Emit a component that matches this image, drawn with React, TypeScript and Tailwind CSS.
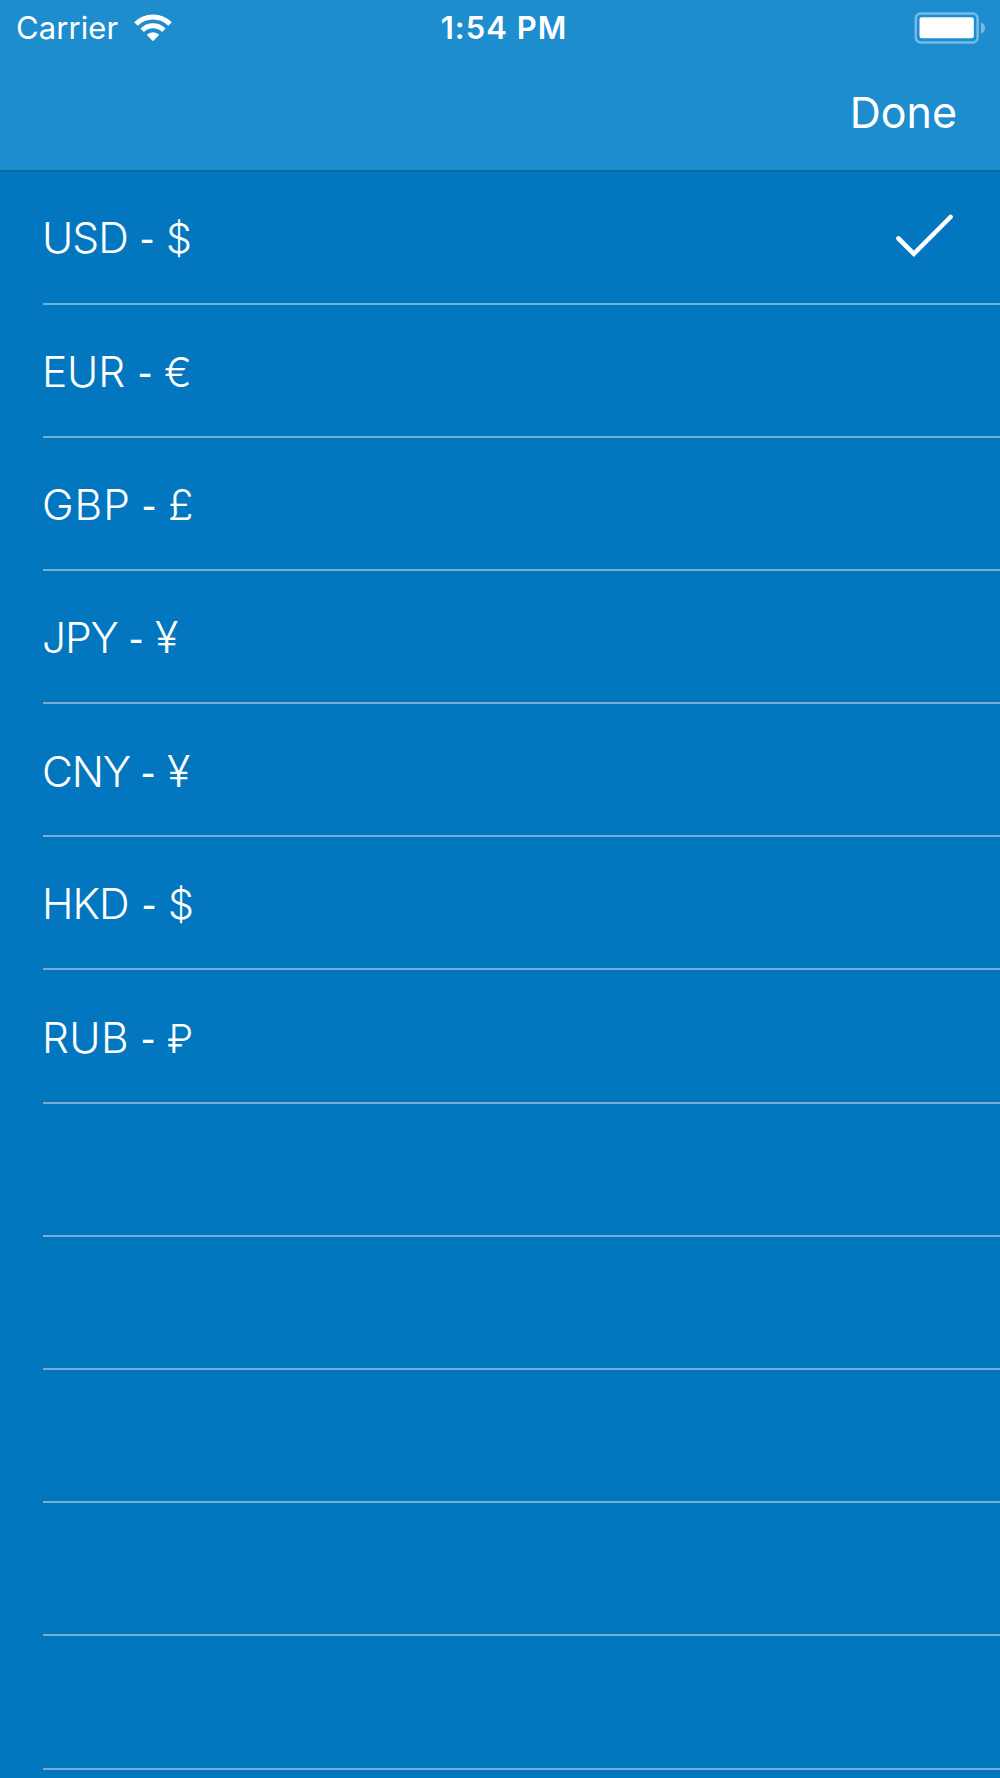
const currencies = [
  { code: "USD", symbol: "$", fit: "w-[98px] tracking-[-1px]", glyph: "text-[41px]" },
  { code: "EUR", symbol: "€", fit: "w-[96px] tracking-[-0.2px]", glyph: "text-[41px]" },
  { code: "GBP", symbol: "£", fit: "w-[100px] tracking-[1px]", glyph: "text-[42px]" },
  { code: "JPY", symbol: "¥", fit: "w-[87px] tracking-[-1.2px]", glyph: "text-[43px]" },
  { code: "CNY", symbol: "¥", fit: "w-[99px] tracking-[-1.2px]", glyph: "text-[43px]" },
  { code: "HKD", symbol: "$", fit: "w-[100px] tracking-[-1px]", glyph: "text-[41px]" },
  { code: "RUB", symbol: "₽", fit: "w-[99px] tracking-[0.4px]", glyph: "text-[39px]" },
];
const emptyRows = [0, 1, 2, 3, 4];
const selected = "USD";

function WifiIcon() {
  return (
    <svg className="-mt-0.5" width="40" height="30" viewBox="0 0 40 30" fill="none" stroke="white" strokeWidth="5">
      <path d="M3 12A24 24 0 0 1 37 12M9.2 18.2A15.3 15.3 0 0 1 30.8 18.2" />
      <path d="M13.8 22.8A8.8 8.8 0 0 1 26.2 22.8L20.8 28.5Q20 29.2 19.2 28.5Z" fill="white" stroke="none" />
    </svg>
  );
}

function BatteryIcon() {
  return (
    <svg width="72" height="32" viewBox="0 0 72 32">
      <rect x="1.8" y="1.5" width="61.8" height="29" rx="5" fill="none" stroke="#76bbe8" strokeWidth="2.4" />
      <rect x="5.5" y="5.3" width="54.3" height="20.9" rx="2.2" fill="white" />
      <path d="M67 10.5Q71 12 71 16T67 21.5Z" fill="#76bbe8" />
    </svg>
  );
}

function CheckIcon() {
  return (
    <svg className="-mt-[6px]" width="60" height="44" viewBox="0 0 60 44" fill="none" stroke="white" strokeWidth="4.6" strokeLinecap="round">
      <path d="M3.5 24.5L18.8 39.8L55.5 3" strokeLinejoin="miter" />
    </svg>
  );
}

export default function App() {
  return (
    <div className="h-[1778px] w-[1000px] overflow-hidden bg-[#0277bf] font-['Inter',sans-serif] text-white">
      <header className="h-[172px] border-b-2 border-[#0c68a2] bg-[#1e8dce]">
        <div className="grid h-[55px] grid-cols-3 items-center pl-4 pr-[14px]">
          <div className="flex items-center gap-[15px] pt-px text-[31px]">
            <span className="tracking-[0.1px]">Carrier</span>
            <WifiIcon />
          </div>
          <span className="pl-[6px] pt-px text-center text-[31px] font-semibold tracking-[1px]">1:54 PM</span>
          <div className="flex justify-end">
            <BatteryIcon />
          </div>
        </div>
        <div className="flex h-[115px] items-center justify-end pr-[43px] text-[43px]">Done</div>
      </header>
      <main className="-mt-[0.7px]">
        {currencies.map(({ code, symbol, fit, glyph }) => (
          <div key={code} className="ml-[43px] flex h-[133.2px] items-center justify-between border-b-2 border-[#7aaed4] pr-[45px] pt-[4px] text-[42.5px] font-light leading-[52px]">
            <div className="-ml-px flex items-baseline">
              <span className={fit}>{code}</span>
              <span className="w-[26px] font-['Liberation_Sans',sans-serif]">-</span>
              <span className={glyph}>{symbol}</span>
            </div>
            {code === selected && <CheckIcon />}
          </div>
        ))}
        {emptyRows.map((row) => (
          <div key={row} className="ml-[43px] h-[133.2px] border-b-2 border-[#7aaed4]" />
        ))}
      </main>
    </div>
  );
}
